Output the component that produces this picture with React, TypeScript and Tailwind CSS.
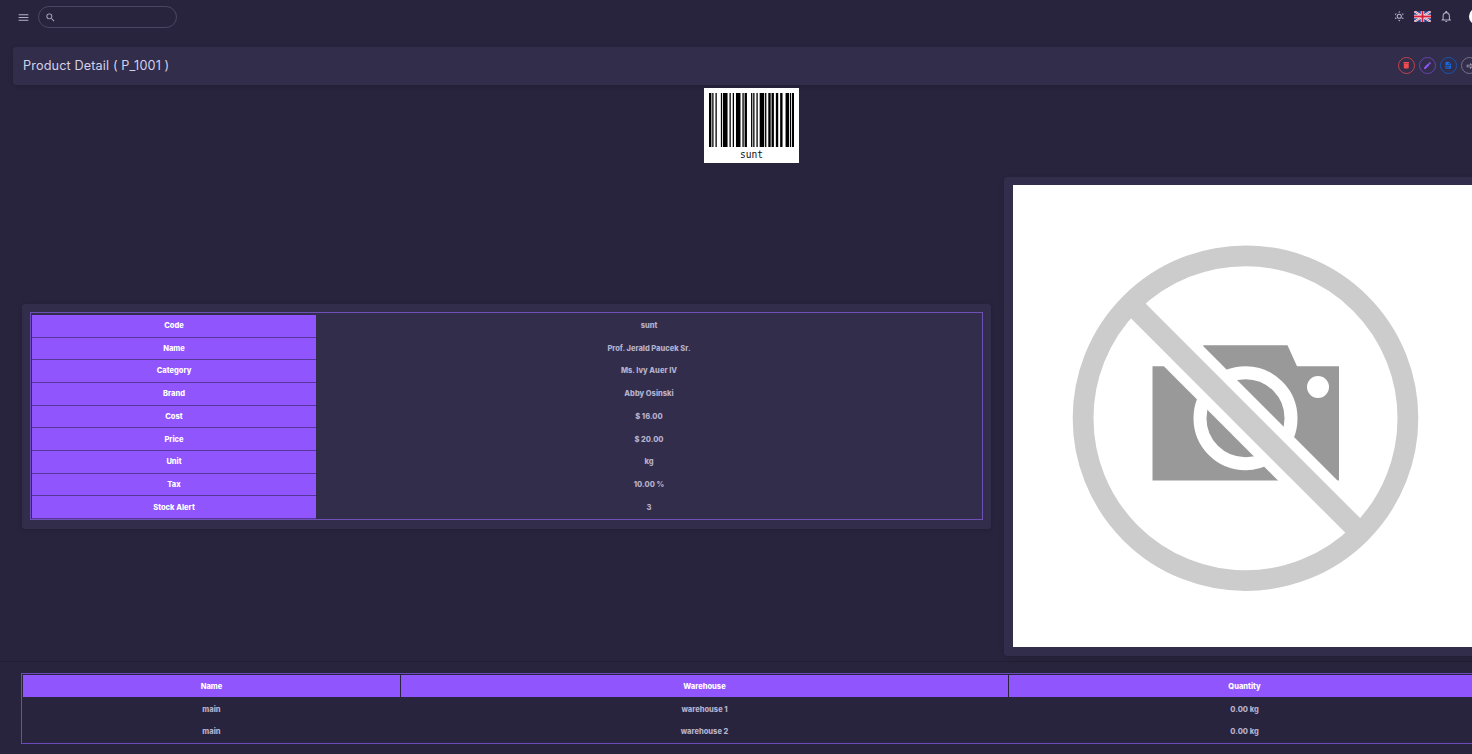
import React from 'react';

const CODE_MODULES = '2112141142121242112411121241122122222331112';

const details: [string, string][] = [
  ['Code', 'sunt'],
  ['Name', 'Prof. Jerald Paucek Sr.'],
  ['Category', 'Ms. Ivy Auer IV'],
  ['Brand', 'Abby Osinski'],
  ['Cost', '$ 16.00'],
  ['Price', '$ 20.00'],
  ['Unit', 'kg'],
  ['Tax', '10.00 %'],
  ['Stock Alert', '3'],
];

const stock = [
  ['main', 'warehouse 1', '0.00 kg'],
  ['main', 'warehouse 2', '0.00 kg'],
];

function Icon({ d, className }: { d: string; className: string }) {
  return (
    <svg viewBox="0 0 24 24" fill="currentColor" className={`shrink-0 ${className}`}>
      <path d={d} />
    </svg>
  );
}

const MENU = 'M3,6H21V8H3V6M3,11H21V13H3V11M3,16H21V18H3V16Z';
const SEARCH =
  'M9.5,3A6.5,6.5 0 0,1 16,9.5C16,11.11 15.41,12.59 14.44,13.73L14.71,14H15.5L20.5,19L19,20.5L14,15.5V14.71L13.73,14.44C12.59,15.41 11.11,16 9.5,16A6.5,6.5 0 0,1 3,9.5A6.5,6.5 0 0,1 9.5,3M9.5,5C7,5 5,7 5,9.5C5,12 7,14 9.5,14C12,14 14,12 14,9.5C14,7 12,5 9.5,5Z';
const SUN =
  'M12,7A5,5 0 0,1 17,12A5,5 0 0,1 12,17A5,5 0 0,1 7,12A5,5 0 0,1 12,7M12,9A3,3 0 0,0 9,12A3,3 0 0,0 12,15A3,3 0 0,0 15,12A3,3 0 0,0 12,9M12,2L14.39,5.42C13.65,5.15 12.84,5 12,5C11.16,5 10.35,5.15 9.61,5.42L12,2M3.34,7L7.5,6.65C6.9,7.16 6.36,7.78 5.94,8.5C5.5,9.24 5.25,10 5.11,10.79L3.34,7M3.36,17L5.12,13.23C5.26,14 5.53,14.78 5.95,15.5C6.37,16.24 6.91,16.86 7.5,17.37L3.36,17M20.65,7L18.88,10.79C18.74,10 18.47,9.23 18.05,8.5C17.63,7.78 17.1,7.15 16.5,6.64L20.65,7M20.64,17L16.5,17.36C17.09,16.85 17.62,16.22 18.04,15.5C18.46,14.77 18.73,14 18.87,13.21L20.64,17M12,22L9.59,18.56C10.33,18.83 11.14,19 12,19C12.82,19 13.63,18.83 14.37,18.56L12,22Z';
const BELL =
  'M10 21H14C14 22.1 13.1 23 12 23S10 22.1 10 21M21 19V20H3V19L5 17V11C5 7.9 7 5.2 10 4.3V4C10 2.9 10.9 2 12 2S14 2.9 14 4V4.3C17 5.2 19 7.9 19 11V17L21 19M17 11C17 8.2 14.8 6 12 6S7 8.2 7 11V18H17V11Z';
const TRASH =
  'M20 3H4V6H20V3M5 7V19A2 2 0 0 0 7 21H17A2 2 0 0 0 19 19V7H5M10 11V16H14V11Z';
const PENCIL =
  'M20.71,7.04C21.1,6.65 21.1,6 20.71,5.63L18.37,3.29C18,2.9 17.35,2.9 16.96,3.29L15.12,5.12L18.87,8.87M3,17.25V21H6.75L17.81,9.93L14.06,6.18L3,17.25Z';
const FILE =
  'M13,9H18.5L13,3.5V9M6,2H14L20,8V20A2,2 0 0,1 18,22H6C4.89,22 4,21.1 4,20V4C4,2.89 4.89,2 6,2M15,18V16H6V18H15M18,14V12H6V14H18Z';
const ARROW = 'M4,15V9H12V4.16L19.84,12L12,19.84V15H4M6,13H14V15L17,12L14,9V11H6V13Z';

function Flag() {
  return (
    <svg viewBox="0 0 60 38" preserveAspectRatio="none" className="h-[11px] w-[17px]">
      <rect width="60" height="38" fill="#2c4593" />
      <path d="M0 0L60 38M60 0L0 38" stroke="#fff" strokeWidth="7" />
      <path d="M0 0L60 38M60 0L0 38" stroke="#d8324a" strokeWidth="2.5" />
      <path d="M30 0V38M0 19H60" stroke="#fff" strokeWidth="12" />
      <path d="M30 0V38M0 19H60" stroke="#d5213d" strokeWidth="7" />
    </svg>
  );
}

function Barcode() {
  let x = 0;
  const bars = CODE_MODULES.split('').map((c, i) => {
    const w = Number(c);
    const bar = i % 2 === 0 ? <rect key={i} x={x} y="0" width={w + 0.2} height="54" /> : null;
    x += w;
    return bar;
  });
  return (
    <div className="mt-[3px] ml-[704px] flex h-[75px] w-[95px] flex-col items-center bg-white pt-[5px]">
      <svg viewBox="0 0 79.2 54" preserveAspectRatio="none" className="h-[54px] w-[85.4px] shrink-0">
        {bars}
      </svg>
      <span className="mt-[2px] font-['DejaVu_Sans_Mono',monospace] text-[9.6px] leading-[12px] text-[#111]">sunt</span>
    </div>
  );
}

function NoPicture() {
  return (
    <svg viewBox="0 0 465 462" className="block h-[462px] w-[465px]">
      <rect width="465" height="462" fill="#fff" />
      <path d="M139.5 181.3H181L190.5 160.3H274.5L284 181.3H326V295.5H139.5Z" fill="#999" />
      <circle cx="305" cy="202" r="11" fill="#fff" />
      <circle cx="232.5" cy="233.2" r="45.5" fill="none" stroke="#fff" strokeWidth="13" />
      <path d="M118 118.7L347 347.7" stroke="#fff" strokeWidth="42" />
      <path d="M118 118.7L347 347.7" stroke="#ccc" strokeWidth="20.8" />
      <circle cx="232.5" cy="233.2" r="162.4" fill="none" stroke="#ccc" strokeWidth="20.8" />
    </svg>
  );
}

const circle = 'flex h-[17px] w-[17px] items-center justify-center rounded-full border';

export default function App() {
  return (
    <div className="h-[754px] w-full overflow-hidden bg-[#28243d] font-['Inter',sans-serif] text-[#b5b0cb]">
      <div className="flex h-[754px] w-[1501px] flex-col">
        <header className="flex h-[34px] shrink-0 items-center pl-[16.5px]">
          <Icon d={MENU} className="h-[13px] w-[13px]" />
          <div className="ml-[8px] flex h-[22px] w-[139px] items-center rounded-full border border-[#4b4663] pl-[6px]">
            <Icon d={SEARCH} className="h-[11px] w-[11px]" />
          </div>
          <div className="ml-[1216px] flex items-center pb-px">
            <Icon d={SUN} className="h-[12.5px] w-[12.5px]" />
            <div className="ml-[8.5px]"><Flag /></div>
            <Icon d={BELL} className="ml-[9.5px] h-[12.5px] w-[12.5px]" />
            <div className="ml-[16.5px] h-[17px] w-[17px] rounded-full bg-white" />
          </div>
        </header>

        <div className="mt-[13px] ml-[12.5px] flex h-[38px] w-[1477px] shrink-0 items-center rounded-[3px] bg-[#312d4b] pl-[10.5px] shadow-[0_1px_4px_rgba(19,17,32,0.25)]">
          <h1 className="w-[1374.5px] pb-px text-[12.7px] leading-[18px] tracking-[0.12px] text-[#d5d1e8]">Product Detail ( P_1001 )</h1>
          <div className="flex gap-[4.3px] pb-px">
            <span className={`${circle} border-[#c2434f] text-[#ee4a52]`}><Icon d={TRASH} className="h-[8.5px] w-[8.5px]" /></span>
            <span className={`${circle} border-[#6744b0] text-[#9155fd]`}><Icon d={PENCIL} className="h-[9px] w-[9px]" /></span>
            <span className={`${circle} border-[#1c56b0] text-[#1769dd]`}><Icon d={FILE} className="h-[8.5px] w-[8.5px]" /></span>
            <span className={`${circle} border-[#77728a] text-[#a09bb2]`}><Icon d={ARROW} className="h-[10px] w-[10px]" /></span>
          </div>
        </div>

        <Barcode />

        <div className="mt-[14px] flex h-[479px] shrink-0 items-center pl-[22px]">
          <section className="h-[225px] w-[969px] rounded-[3px] bg-[#312d4b] p-[8px] shadow-[0_1px_4px_rgba(19,17,32,0.25)]">
            <div className="h-[208px] border border-[#6f50b8] pt-[1.9px] pl-px">
              {details.map(([label, value]) => (
                <div key={label} className="flex h-[22.7px] text-[7.5px] font-extrabold">
                  <div className="flex w-[284px] items-center justify-center border-b border-[#563799] bg-[#9155fd] text-white">
                    {label}
                  </div>
                  <div className="flex flex-1 items-center justify-center pb-px">{value}</div>
                </div>
              ))}
            </div>
          </section>
          <section className="ml-[13px] h-[479px] w-[483px] rounded-[3px] bg-[#312d4b] px-[9px] pt-[8px] shadow-[0_1px_4px_rgba(19,17,32,0.25)]">
            <NoPicture />
          </section>
        </div>

        <div className="mt-[5px] h-px shrink-0 bg-[#211e33]" />

        <div className="mt-[11px] ml-[21px] h-[71px] w-[1461px] shrink-0 border border-[#6b4abd] pt-px pl-px text-[7.5px] font-extrabold">
          <div className="grid h-[22px] grid-cols-[377px_607px_471px] gap-px text-white">
            {['Name', 'Warehouse', 'Quantity'].map((h) => (
              <div key={h} className="flex items-center justify-center bg-[#9155fd] pt-px">{h}</div>
            ))}
          </div>
          {stock.map((row) => (
            <div key={row[1]} className="grid h-[22.7px] grid-cols-[377px_607px_471px] items-center gap-px pt-[2px]">
              {row.map((cell) => (
                <div key={cell} className="text-center">{cell}</div>
              ))}
            </div>
          ))}
        </div>
      </div>
    </div>
  );
}
